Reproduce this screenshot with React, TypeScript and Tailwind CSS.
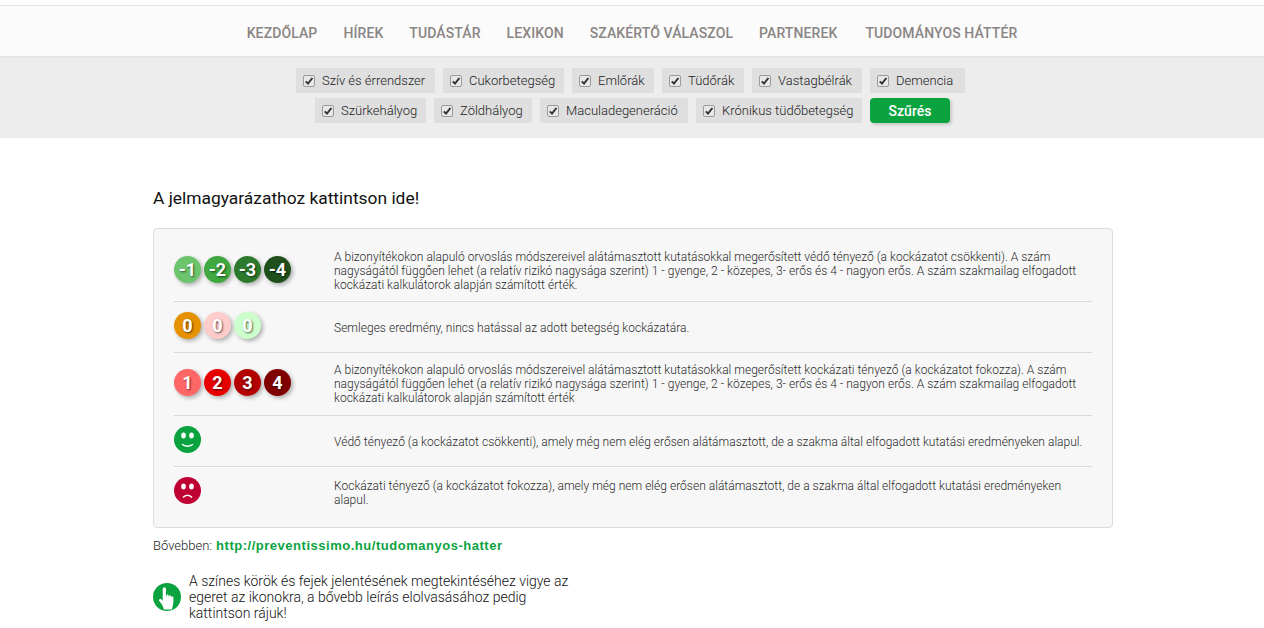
const navItems = ['KEZDŐLAP', 'HÍREK', 'TUDÁSTÁR', 'LEXIKON', 'SZAKÉRTŐ VÁLASZOL', 'PARTNEREK']

const filtersTop = [
  { label: 'Szív és érrendszer', width: 'w-[139px]' },
  { label: 'Cukorbetegség', width: 'w-[121px]' },
  { label: 'Emlőrák', width: 'w-[82px]' },
  { label: 'Tüdőrák', width: 'w-[82px]' },
  { label: 'Vastagbélrák', width: 'w-[110px]' },
  { label: 'Demencia', width: 'w-[95px]' },
]
const filtersBottom = [
  { label: 'Szürkehályog', width: 'w-[111px]' },
  { label: 'Zöldhályog', width: 'w-[98px]' },
  { label: 'Maculadegeneráció', width: 'w-[148px]' },
  { label: 'Krónikus tüdőbetegség', width: 'w-[166px]' },
]

const protective = [
  { label: '-1', color: 'bg-[#6cc56c]' },
  { label: '-2', color: 'bg-[#3fa83f]' },
  { label: '-3', color: 'bg-[#2d7a2d]' },
  { label: '-4', color: 'bg-[#1f4f1a]' },
]
const neutral = [
  { label: '0', color: 'bg-[#e69100]' },
  { label: '0', color: 'bg-[#ffcccc]' },
  { label: '0', color: 'bg-[#ccffcc]' },
]
const risk = [
  { label: '1', color: 'bg-[#ff6666]' },
  { label: '2', color: 'bg-[#e60000]' },
  { label: '3', color: 'bg-[#b30000]' },
  { label: '4', color: 'bg-[#800000]' },
]

function Filter({ label, width }: { label: string; width: string }) {
  return (
    <label className={`flex h-[25px] items-center gap-[7px] whitespace-nowrap bg-[#dfdfdf] pl-[7px] text-[13px] font-light text-[#222] ${width}`}>
      <span className="relative h-[12px] w-[12px]">
        <input type="checkbox" defaultChecked className="block h-[12px] w-[12px] appearance-none rounded-[2px] border border-[#9a9a9a] bg-[#e8e8e8]" />
        <svg viewBox="0 0 12 12" className="absolute left-0 top-0 h-[12px] w-[12px]">
          <path d="M2.8 6.4 5 8.6 9.4 3" fill="none" stroke="#333" strokeWidth="2" />
        </svg>
      </span>
      {label}
    </label>
  )
}

function Circles({ items }: { items: { label: string; color: string }[] }) {
  return (
    <div className="mb-[3px] flex w-[160px] shrink-0 gap-[3px]">
      {items.map((c, i) => (
        <span
          key={i}
          className={`flex h-[27px] w-[27px] items-center justify-center rounded-full text-[18px] font-bold text-white shadow-[2px_2px_4px_rgba(0,0,0,0.3)] [text-shadow:1px_1px_2px_rgba(0,0,0,0.6)] ${c.color}`}
        >
          {c.label}
        </span>
      ))}
    </div>
  )
}

function Face({ sad }: { sad?: boolean }) {
  return (
    <div className="mb-[3px] w-[160px] shrink-0">
      <svg viewBox="0 0 27 27" className="h-[27px] w-[27px]">
        <circle cx="13.5" cy="13.5" r="13.5" fill={sad ? '#bf0033' : '#0ba33f'} />
        <ellipse cx="9.5" cy="9.5" rx="2.3" ry="2.9" fill="#fff" />
        <ellipse cx="17.5" cy="9.5" rx="2.3" ry="2.9" fill="#fff" />
        {sad ? (
          <path d="M9 20.5c2.5-3 6.5-3 9 0" fill="none" stroke="#fff" strokeWidth="1.5" />
        ) : (
          <path d="M8 18.2c3 2.6 8 2.6 11 0" fill="none" stroke="#fff" strokeWidth="1.5" />
        )}
      </svg>
    </div>
  )
}

function Row({ height, left, text, last, textClass = 'pt-[1px]' }: { height: string; left: React.ReactNode; text: string; last?: boolean; textClass?: string }) {
  return (
    <div className={`flex items-center ${height} ${last ? '' : 'border-b border-[#d9d9d9]'}`}>
      {left}
      <p className={`text-[12px] font-light leading-[14px] tracking-[0.02px] text-[#2a2a2a] ${textClass}`}>{text}</p>
    </div>
  )
}

export default function App() {
  return (
    <div className="min-h-[628px] bg-white [font-family:Roboto,sans-serif]">
      <div className="h-[5px]" />
      <nav className="flex h-[52px] items-center justify-center gap-[26px] border-y border-[#e3e3e3] bg-[#fbfbfb] pt-[4px] text-[14px] font-medium tracking-[0.1px] text-[#8a8583]">
        {navItems.map((item) => (
          <a key={item}>{item}</a>
        ))}
        <a className="ml-[2px]">TUDOMÁNYOS HÁTTÉR</a>
      </nav>
      <div className="flex h-[81px] flex-col items-center gap-[5px] border-t border-[#e8e8e8] bg-[#ededed] pt-[10px]">
        <div className="mr-[3px] flex gap-[8px]">
          {filtersTop.map((f) => (
            <Filter key={f.label} {...f} />
          ))}
        </div>
        <div className="ml-[1px] flex gap-[8px]">
          {filtersBottom.map((f) => (
            <Filter key={f.label} {...f} />
          ))}
          <button className="h-[25px] w-[80px] rounded-[4px] bg-[#0ba33f] pt-[1px] text-[14px] font-medium text-white shadow-[2px_2px_3px_rgba(0,0,0,0.15)]">
            Szűrés
          </button>
        </div>
      </div>

      <main className="ml-[153px] w-[960px] pt-[49px]">
        <h2 className="text-[17.4px] leading-[22px] text-[#111]">A jelmagyarázathoz kattintson ide!</h2>

        <div className="mt-[19px] rounded-[4px] border border-[#dcdcdc] bg-[#f7f7f7] px-[20px] pb-[10px] pt-[12px]">
          <Row
            height="h-[61px]"
            textClass=""
            left={<Circles items={protective} />}
            text="A bizonyítékokon alapuló orvoslás módszereivel alátámasztott kutatásokkal megerősített védő tényező (a kockázatot csökkenti). A szám nagyságától függően lehet (a relatív rizikó nagysága szerint) 1 - gyenge, 2 - közepes, 3- erős és 4 - nagyon erős. A szám szakmailag elfogadott kockázati kalkulátorok alapján számított érték."
          />
          <Row
            height="h-[51px]"
            left={<Circles items={neutral} />}
            text="Semleges eredmény, nincs hatással az adott betegség kockázatára."
          />
          <Row
            height="h-[63px]"
            textClass=""
            left={<Circles items={risk} />}
            text="A bizonyítékokon alapuló orvoslás módszereivel alátámasztott kutatásokkal megerősített kockázati tényező (a kockázatot fokozza). A szám nagyságától függően lehet (a relatív rizikó nagysága szerint) 1 - gyenge, 2 - közepes, 3- erős és 4 - nagyon erős. A szám szakmailag elfogadott kockázati kalkulátorok alapján számított érték"
          />
          <Row
            height="h-[51px]"
            left={<Face />}
            text="Védő tényező (a kockázatot csökkenti), amely még nem elég erősen alátámasztott, de a szakma által elfogadott kutatási eredményeken alapul."
          />
          <Row
            height="h-[50px]"
            last
            left={<Face sad />}
            text="Kockázati tényező (a kockázatot fokozza), amely még nem elég erősen alátámasztott, de a szakma által elfogadott kutatási eredményeken alapul."
          />
        </div>

        <p className="mt-[10px] flex items-baseline gap-[4px] text-[13px] font-light leading-[16px] text-[#222]">
          Bővebben:
          <a className="text-[13px] font-bold tracking-[0.52px] text-[#0ba33f] [font-family:'Liberation_Sans',sans-serif]">
            http://preventissimo.hu/tudomanyos-hatter
          </a>
        </p>

        <div className="mt-[19px] flex items-center gap-[8px]">
          <svg viewBox="0 0 28 28" className="h-[28px] w-[28px] shrink-0">
            <circle cx="14" cy="14" r="14" fill="#0ba33f" />
            <path
              d="M9.7 6a1.65 1.65 0 0 1 3.3 0v6.2l.6 2.3v-2.6q1.2-.8 1.9.4l.5 2.4v-2.2q1.1-.7 1.8.5l.5 2v-1.6q1.5-.7 2.1 1v5.6l-1.5 6.5h-8l-1.5-4.5-3.5-4.5q0-2 2-1.5l1.8 1.8z"
              fill="#fff"
            />
          </svg>
          <p className="w-[390px] text-[14px] font-light leading-[16px] text-[#111]">
            A színes körök és fejek jelentésének megtekintéséhez vigye az egeret az ikonokra, a bővebb leírás elolvasásához pedig kattintson rájuk!
          </p>
        </div>
      </main>
    </div>
  )
}
